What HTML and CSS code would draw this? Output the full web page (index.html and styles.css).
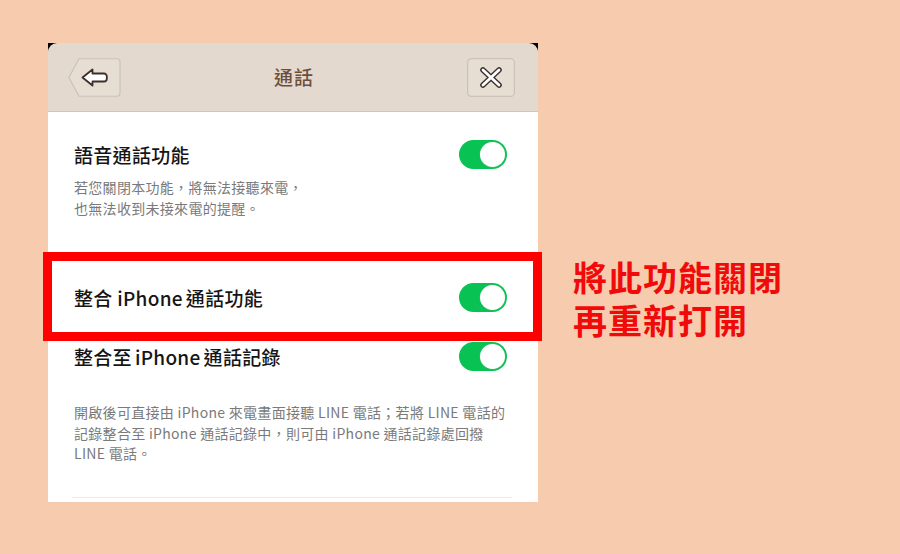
FILE: index.html
```html
<!DOCTYPE html>
<html lang="zh-Hant">
<head>
<meta charset="utf-8">
<title>通話</title>
<link rel="stylesheet" href="styles.css">
</head>
<body>
<div class="stage">
  <div class="panel">
    <header class="bar">
      <button class="btn-back" aria-label="返回">
        <svg width="53" height="39" viewBox="0 0 53 39">
          <path d="M11 0.75 H49 a3 3 0 0 1 3 3 V35.25 a3 3 0 0 1 -3 3 H11 L0.9 19.5 Z" fill="#e6ddd3" stroke="#cdc2b5" stroke-width="1.2"/>
          <path d="M14.5 19.5 L24.5 11.5 V15.5 H36 a2.8 2.8 0 0 1 2.8 2.8 V20.7 a2.8 2.8 0 0 1 -2.8 2.8 H24.5 V27.5 Z" fill="#fff" stroke="#3b2f2a" stroke-width="1.8" stroke-linejoin="round"/>
        </svg>
      </button>
      <h1 class="title">通話</h1>
      <button class="btn-close" aria-label="關閉">
        <svg width="48" height="39" viewBox="0 0 48 39">
          <rect x="0.6" y="0.6" width="46.8" height="37.8" rx="4" fill="#e6ddd3" stroke="#cdc2b5" stroke-width="1.2"/>
          <path d="M16 12 L32 27 M32 12 L16 27" stroke="#3b2f2a" stroke-width="5.6" stroke-linecap="round"/>
          <path d="M16 12 L32 27 M32 12 L16 27" stroke="#fff" stroke-width="2.8" stroke-linecap="round"/>
        </svg>
      </button>
    </header>
    <section class="body">
      <div class="row first">
        <span class="label">語音通話功能</span>
        <span class="toggle"><span class="knob"></span></span>
      </div>
      <p class="desc first-desc">若您關閉本功能，將無法接聽來電，<br>也無法收到未接來電的提醒。</p>

      <div class="row second">
        <span class="label">整合 iPhone<span class="gap"></span>通話功能</span>
        <span class="toggle"><span class="knob"></span></span>
        <span class="highlight"></span>
      </div>
      <div class="row third">
        <span class="label">整合至<span class="gap"></span>iPhone<span class="gap"></span>通話記錄</span>
        <span class="toggle"><span class="knob"></span></span>
      </div>
      <p class="desc second-desc">開啟後可直接由 iPhone 來電畫面接聽 LINE 電話；若將 LINE 電話的<br>記錄整合至 iPhone 通話記錄中，則可由 iPhone 通話記錄處回撥<br>LINE 電話。</p>
      <div class="sep"></div>
    </section>
  </div>
  <div class="note">
    <div class="note-line">將此功能關閉</div>
    <div class="note-line">再重新打開</div>
  </div>
</div>
</body>
</html>
```

FILE: styles.css
```css
* { box-sizing: border-box; }
html, body { margin: 0; padding: 0; }
body {
  background: #f7cbad;
  width: 900px;
  height: 554px;
  overflow: hidden;
  font-family: "Noto Sans CJK TC", "Noto Sans", sans-serif;
}
.stage {
  display: flex;
  align-items: flex-start;
  padding: 43px 0 0 48px;
}
.panel {
  width: 490px;
  background: linear-gradient(#000 0 8px, #fff 8px);
}
.bar {
  height: 69px;
  background: #e3d9cf;
  border-bottom: 1px solid #cfc6bc;
  border-radius: 9px 9px 0 0;
  display: flex;
  align-items: center;
  justify-content: space-between;
  padding: 0 23px 0 20px;
}
.bar button {
  border: 0;
  padding: 0;
  margin: 0;
  background: none;
  display: block;
  line-height: 0;
}
.btn-back { margin-top: 1px; }
.btn-close { margin-top: 1px; }
.title {
  margin: 0 0 1px 0;
  font-size: 19px;
  font-weight: 500;
  color: #6c4e3d;
  letter-spacing: 1px;
}
.body {
  background: #fff;
  padding: 0 31px 4px 26px;
}
.row {
  position: relative;
  display: flex;
  align-items: center;
  justify-content: space-between;
  height: 29px;
}
.row.first { margin-top: 28px; }
.row.second { margin-top: 64px; }
.row.third { margin-top: 30px; }
.label {
  font-size: 19px;
  font-weight: 500;
  color: #151515;
  letter-spacing: 0.3px;
}
.gap {
  display: inline-block;
  width: 3px;
}
.toggle {
  width: 48px;
  height: 29px;
  border-radius: 15px;
  background: #08c254;
  display: flex;
  align-items: center;
  justify-content: flex-end;
  padding-right: 2px;
}
.knob {
  width: 25px;
  height: 25px;
  border-radius: 50%;
  background: #fff;
  box-shadow: 0 0 0 0.5px #3fbd6e;
}
.desc {
  margin: 0;
  font-size: 14px;
  line-height: 21px;
  color: #7a7a7a;
  letter-spacing: 0.3px;
}
.first-desc { margin-top: 8px; }
.second-desc { margin-top: 31px; line-height: 20.5px; }
.sep {
  margin: 33px -5px 0 -2px;
  height: 1px;
  background: #ececec;
}
.highlight {
  position: absolute;
  left: -31px;
  top: -31px;
  width: 499px;
  height: 89px;
  border: 9px solid #ff0000;
  pointer-events: none;
}
.note {
  margin: 217px 0 0 35px;
  display: flex;
  flex-direction: column;
  gap: 9px;
}
.note-line {
  font-size: 34px;
  font-weight: 700;
  line-height: 34px;
  color: #f00a0a;
  letter-spacing: 1px;
}
```
